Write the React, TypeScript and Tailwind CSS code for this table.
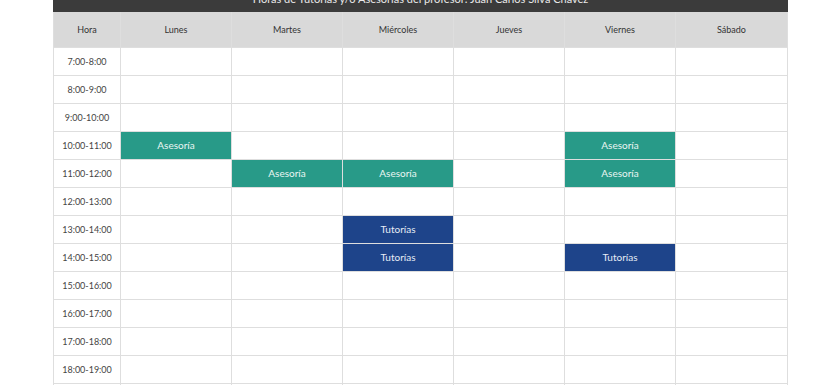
const days = ['Lunes', 'Martes', 'Miércoles', 'Jueves', 'Viernes', 'Sábado'];

const hours = [
  '7:00-8:00',
  '8:00-9:00',
  '9:00-10:00',
  '10:00-11:00',
  '11:00-12:00',
  '12:00-13:00',
  '13:00-14:00',
  '14:00-15:00',
  '15:00-16:00',
  '16:00-17:00',
  '17:00-18:00',
  '18:00-19:00',
  '19:00-20:00',
];

// slot -> day index -> kind
const events: Record<string, Record<number, 'a' | 't'>> = {
  '10:00-11:00': { 0: 'a', 4: 'a' },
  '11:00-12:00': { 1: 'a', 2: 'a', 4: 'a' },
  '13:00-14:00': { 2: 't' },
  '14:00-15:00': { 2: 't', 4: 't' },
};

const App = () => {
  return (
    <div className="min-h-screen bg-white font-['Lato','Open_Sans',sans-serif]">
      <div className="ml-[53px] w-[735px] -mt-[13px]">
        {/* Title bar */}
        <div className="h-[25px] bg-[#3b3b3b] flex items-center justify-center text-[11px] text-[#e8e8e8]">
          Horas de Tutorías y/o Asesorías del profesor: Juan Carlos Silva Chávez
        </div>

        {/* Schedule grid */}
        <div className="grid grid-cols-[66px_repeat(5,110px)_111px] gap-px bg-[#dedede] px-px pb-px">
          <div className="h-[35px] bg-[#d9d9d9] flex items-center justify-center text-[9px] text-[#333]">
            Hora
          </div>
          {days.map((d) => (
            <div
              key={d}
              className="h-[35px] bg-[#d9d9d9] flex items-center justify-center text-[9px] text-[#333]"
            >
              {d}
            </div>
          ))}

          {hours.map((h) => (
            <>
              <div
                key={h}
                className="h-[27px] bg-white flex items-center justify-center text-[9px] text-[#444]"
              >
                {h}
              </div>
              {days.map((d, i) => {
                const kind = events[h]?.[i];
                if (kind === 'a') {
                  return (
                    <div
                      key={h + d}
                      className="h-[27px] bg-[#289a88] flex items-center justify-center text-[10px] text-[#eaf6f3]"
                    >
                      Asesoría
                    </div>
                  );
                }
                if (kind === 't') {
                  return (
                    <div
                      key={h + d}
                      className="h-[27px] bg-[#1e448a] flex items-center justify-center text-[10px] text-[#e6ecf5]"
                    >
                      Tutorías
                    </div>
                  );
                }
                return <div key={h + d} className="h-[27px] bg-white" />;
              })}
            </>
          ))}
        </div>
      </div>
    </div>
  );
};

export default App;
